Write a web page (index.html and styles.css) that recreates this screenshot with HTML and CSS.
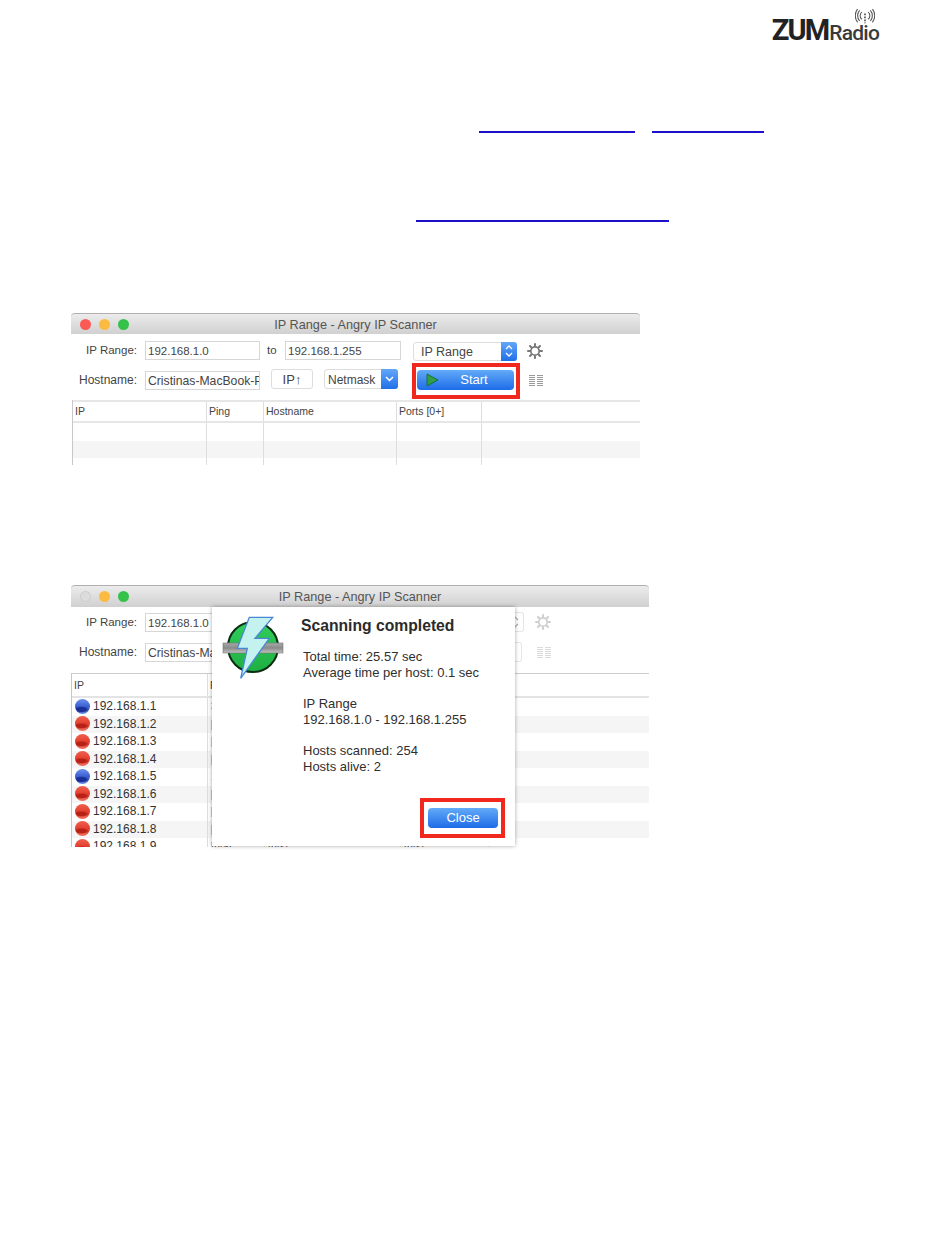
FILE: index.html
```html
<!DOCTYPE html>
<html lang="en">
<head>
<meta charset="utf-8">
<title>ZUM Radio - Angry IP Scanner</title>
<link rel="stylesheet" href="styles.css">
</head>
<body>
<div class="page">
  <header class="brand">
    <div class="logo">
      <span class="logo-zum">ZUM</span><span class="logo-radio">Radio</span>
      <svg class="logo-signal" width="20" height="16" viewBox="0 0 22 18" fill="none" stroke="#555" stroke-width="1.2">
        <path d="M7.5 3.5a5 5 0 0 0 0 8"/>
        <path d="M5 1.5a9 9 0 0 0 0 12"/>
        <path d="M2.7 0a12 12 0 0 0 0 15"/>
        <path d="M14.5 3.5a5 5 0 0 1 0 8"/>
        <path d="M17 1.5a9 9 0 0 1 0 12"/>
        <path d="M19.3 0a12 12 0 0 1 0 15"/>
        <path d="M11 5v11" stroke-width="1.6" stroke-dasharray="2 1.4" stroke="#333"/>
      </svg>
    </div>
  </header>

  <div class="links links-one">
    <span class="link link-a"></span>
    <span class="link link-b"></span>
  </div>
  <div class="links links-two">
    <span class="link link-c"></span>
  </div>

  <section class="window window-start">
    <div class="titlebar">
      <span class="light light-red"></span><span class="light light-yellow"></span><span class="light light-green"></span>
      <span class="title">IP Range - Angry IP Scanner</span>
    </div>
    <div class="toolbar">
      <div class="row row-first">
        <label class="label label-range">IP Range:</label>
        <span class="input input-ip">192.168.1.0</span>
        <span class="to">to</span>
        <span class="input input-ip2">192.168.1.255</span>
        <span class="select select-range">IP Range<span class="select-cap">
          <svg width="8" height="14" viewBox="0 0 8 14" fill="none" stroke="#fff" stroke-width="1.3"><path d="M1 5l3-3 3 3M1 9l3 3 3-3"/></svg>
        </span></span>
        <svg class="gear" width="16" height="16" viewBox="0 0 16 16"><use href="#gear-shape"/></svg>
      </div>
      <div class="row row-second">
        <label class="label">Hostname:</label>
        <span class="input input-ip host">Cristinas-MacBook-Pro</span>
        <span class="button button-ip">IP↑</span>
        <span class="select select-mask">Netmask<span class="select-cap cap-mask">
          <svg width="9" height="6" viewBox="0 0 9 6" fill="none" stroke="#fff" stroke-width="1.5"><path d="M1 1l3.5 3.5L8 1"/></svg>
        </span></span>
        <span class="start">
          <svg class="play" width="13" height="14" viewBox="0 0 13 14"><path d="M1 1l11 6-11 6z" fill="#2f9e45" stroke="#14662a" stroke-width=".8"/></svg>
          Start
        </span>
        <svg class="columns" width="14" height="12" viewBox="0 0 14 12" stroke="#999" stroke-width="1"><path d="M0 .5h6M8 .5h6M0 2.5h6M8 2.5h6M0 4.5h6M8 4.5h6M0 6.5h6M8 6.5h6M0 8.5h6M8 8.5h6M0 10.5h6M8 10.5h6"/></svg>
      </div>
    </div>
    <div class="table">
      <div class="thead">
        <span class="cell">IP</span><span class="cell">Ping</span><span class="cell">Hostname</span><span class="cell">Ports [0+]</span><span class="cell"></span>
      </div>
      <div class="trow blank"><span class="cell"></span><span class="cell"></span><span class="cell"></span><span class="cell"></span><span class="cell"></span></div>
      <div class="trow blank stripe"><span class="cell"></span><span class="cell"></span><span class="cell"></span><span class="cell"></span><span class="cell"></span></div>
      <div class="trow blank short"><span class="cell"></span><span class="cell"></span><span class="cell"></span><span class="cell"></span><span class="cell"></span></div>
    </div>
    <div class="redbox box-start"></div>
  </section>

  <section class="window window-done">
    <div class="titlebar">
      <span class="light light-off"></span><span class="light light-yellow"></span><span class="light light-green"></span>
      <span class="title">IP Range - Angry IP Scanner</span>
    </div>
    <div class="toolbar toolbar-done">
      <div class="row">
        <label class="label label-range">IP Range:</label>
        <span class="input input-wide">192.168.1.0</span>
        <span class="ghost ghost-select">
          <svg width="8" height="14" viewBox="0 0 8 14" fill="none" stroke="#aaa" stroke-width="1.2"><path d="M1 5l3-3 3 3M1 9l3 3 3-3"/></svg>
        </span>
        <svg class="gear gear-faded" width="16" height="16" viewBox="0 0 16 16"><use href="#gear-shape"/></svg>
      </div>
      <div class="row">
        <label class="label">Hostname:</label>
        <span class="input input-wide host">Cristinas-MacBook-Pro</span>
        <span class="ghost ghost-button"></span>
        <svg class="columns columns-faded" width="14" height="12" viewBox="0 0 14 12" stroke="#999" stroke-width="1"><path d="M0 .5h6M8 .5h6M0 2.5h6M8 2.5h6M0 4.5h6M8 4.5h6M0 6.5h6M8 6.5h6M0 8.5h6M8 8.5h6M0 10.5h6M8 10.5h6"/></svg>
      </div>
    </div>
    <div class="table table-done">
      <div class="thead"><span class="cell">IP</span><span class="cell">Ping</span><span class="cell">Hostname</span><span class="cell">Ports</span><span class="cell"></span></div>
      <div class="trow"><span class="cell ip"><i class="ball ball-blue"></i>192.168.1.1</span><span class="cell">3 ms</span><span class="cell">[n/s]</span><span class="cell">[n/s]</span><span class="cell"></span></div>
      <div class="trow stripe"><span class="cell ip"><i class="ball"></i>192.168.1.2</span><span class="cell">[n/a]</span><span class="cell">[n/s]</span><span class="cell">[n/s]</span><span class="cell"></span></div>
      <div class="trow"><span class="cell ip"><i class="ball"></i>192.168.1.3</span><span class="cell">[n/a]</span><span class="cell">[n/s]</span><span class="cell">[n/s]</span><span class="cell"></span></div>
      <div class="trow stripe"><span class="cell ip"><i class="ball"></i>192.168.1.4</span><span class="cell">[n/a]</span><span class="cell">[n/s]</span><span class="cell">[n/s]</span><span class="cell"></span></div>
      <div class="trow"><span class="cell ip"><i class="ball ball-blue"></i>192.168.1.5</span><span class="cell">1 ms</span><span class="cell">[n/s]</span><span class="cell">[n/s]</span><span class="cell"></span></div>
      <div class="trow stripe"><span class="cell ip"><i class="ball"></i>192.168.1.6</span><span class="cell">[n/a]</span><span class="cell">[n/s]</span><span class="cell">[n/s]</span><span class="cell"></span></div>
      <div class="trow"><span class="cell ip"><i class="ball"></i>192.168.1.7</span><span class="cell">[n/a]</span><span class="cell">[n/s]</span><span class="cell">[n/s]</span><span class="cell"></span></div>
      <div class="trow stripe"><span class="cell ip"><i class="ball"></i>192.168.1.8</span><span class="cell">[n/a]</span><span class="cell">[n/s]</span><span class="cell">[n/s]</span><span class="cell"></span></div>
      <div class="trow"><span class="cell ip"><i class="ball"></i>192.168.1.9</span><span class="cell">[n/a]</span><span class="cell">[n/s]</span><span class="cell">[n/s]</span><span class="cell"></span></div>
    </div>
    <div class="dialog">
      <svg class="bolt" width="62" height="64" viewBox="0 0 62 64">
        <defs>
          <linearGradient id="orb" x1="0" y1="0" x2="0" y2="1"><stop offset="0" stop-color="#2fcf5a"/><stop offset="1" stop-color="#1fae42"/></linearGradient>
          <linearGradient id="pipe" x1="0" y1="0" x2="0" y2="1"><stop offset="0" stop-color="#a8a8a8"/><stop offset=".5" stop-color="#8a8a8a"/><stop offset="1" stop-color="#c2c2c2"/></linearGradient>
        </defs>
        <circle cx="31" cy="31" r="25" fill="url(#orb)" stroke="#0c2c14" stroke-width="2"/>
        <rect x="1" y="27" width="60" height="10" fill="url(#pipe)" stroke="#777" stroke-width=".6"/>
        <path d="M27.3 1.3H50.7L33 22.3h14.3L18.7 62.3l6.6-30H15.3z" fill="#c4f2ee" stroke="#4a86d8" stroke-width="1.3"/>
      </svg>
      <div class="dialog-body">
        <h2 class="dialog-title">Scanning completed</h2>
        <p class="dialog-text">Total time: 25.57 sec<br>Average time per host: 0.1 sec</p>
        <p class="dialog-text">IP Range<br>192.168.1.0 - 192.168.1.255</p>
        <p class="dialog-text">Hosts scanned: 254<br>Hosts alive: 2</p>
      </div>
      <span class="close">Close</span>
      <div class="redbox box-close"></div>
    </div>
  </section>
</div>
<svg class="defs" width="0" height="0" aria-hidden="true">
  <symbol id="gear-shape" viewBox="0 0 16 16">
    <g fill="none" stroke="#777" stroke-linecap="round">
      <circle cx="8" cy="8" r="4.2" stroke-width="1.7"/>
      <path stroke-width="2" d="M8 1v1.6M8 13.4V15M1 8h1.6M13.4 8H15M3 3l1.2 1.2M11.8 11.8L13 13M13 3l-1.2 1.2M4.2 11.8L3 13"/>
    </g>
  </symbol>
</svg>
</body>
</html>
```
FILE: styles.css
```css
* { box-sizing: border-box; }
html, body { margin: 0; padding: 0; background: #fff; }
body { width: 950px; height: 1260px; overflow: hidden; font-family: "Liberation Sans", Arial, sans-serif; color: #333; }
.page { width: 950px; height: 1260px; overflow: hidden; }
.defs { position: absolute; }

.brand { display: flex; justify-content: flex-end; padding: 15px 71px 0 0; height: 131px; }
.logo { position: relative; display: flex; align-items: baseline; height: 30px; }
.logo-zum { font-family: Roboto, sans-serif; font-weight: 700; font-size: 29px; letter-spacing: -1.8px; line-height: 30px; color: #222; }
.logo-radio { font-family: Roboto, sans-serif; font-weight: 500; font-size: 21px; letter-spacing: -.8px; line-height: 30px; color: #3a3a3a; margin-left: 1px; }
.logo-signal { position: absolute; right: 4px; top: -6px; }

.links { display: flex; height: 2px; }
.link { display: block; height: 2px; background: #1c10c8; }
.links-one { padding-left: 479px; gap: 17px; }
.links-two { padding-left: 416px; margin-top: 87px; }
.link-a { width: 156px; }
.link-b { width: 112px; }
.link-c { width: 253px; }

.window { position: relative; margin-left: 71px; overflow: hidden; }
.window-start { width: 569px; height: 152px; margin-top: 91px; }
.window-done { width: 578px; height: 262px; margin-top: 120px; overflow: visible; }
.window-done .table { height: 174px; overflow: hidden; }

.titlebar { position: relative; display: flex; align-items: center; gap: 8px; height: 21px; padding-left: 9px; background: linear-gradient(#ececec, #d0d0d0); border-top: 1px solid #b0b0b0; border-radius: 4px 4px 0 0; }
.window-done .titlebar { height: 22px; }
.light { width: 11px; height: 11px; border-radius: 50%; }
.light-red { background: #fb5a55; }
.light-yellow { background: #fcbb40; }
.light-green { background: #34c24a; }
.light-off { background: #dcdcdc; border: 1px solid #ccc; }
.title { position: absolute; left: 0; right: 0; top: 3px; text-align: center; font-size: 12.7px; line-height: 16px; color: #555; }

.toolbar { display: flex; flex-direction: column; gap: 10px; height: 66px; padding-top: 6px; font-size: 11.5px; }
.toolbar-done { padding-top: 5px; }
.row { display: flex; align-items: center; height: 20px; }
.label { width: 66px; text-align: right; margin-right: 8px; color: #444; white-space: nowrap; font-size: 12px; }
.label-range { font-size: 11.5px; }
.input { display: block; height: 19px; line-height: 19px; padding-left: 2px; background: #fff; border: 1px solid #d6d6d6; overflow: hidden; white-space: nowrap; color: #444; }
.input.host { font-size: 12.2px; }
.input-ip { width: 115px; }
.input-ip2 { width: 116px; }
.input-wide { width: 160px; }
.to { width: 25px; padding-left: 7px; color: #444; }
.select { position: relative; display: block; height: 19px; line-height: 19px; background: #fff; border: 1px solid #ddd; border-radius: 3px; color: #444; }
.select-range { width: 104px; margin: 2px 0 0 12px; padding-left: 7px; font-size: 12.5px; }
.select-mask { width: 74px; margin: -3px 0 0 11px; padding: 1px 0 0 3px; height: 20px; font-size: 12px; }
.select-cap { position: absolute; right: -1px; top: -1px; bottom: -1px; width: 16px; display: flex; align-items: center; justify-content: center; background: linear-gradient(#63a7f8, #1f6fe8); border-radius: 0 3px 3px 0; }
.cap-mask { width: 17px; }
.gear { margin: 1px 0 0 10px; }
.gear-faded { opacity: .35; margin: 0 0 0 11px; }
.button { display: block; width: 42px; height: 20px; margin: -3px 0 0 11px; text-align: center; line-height: 19px; background: #fff; border: 1px solid #ddd; border-radius: 3px; color: #444; font-size: 13px; }
.start { position: relative; display: flex; justify-content: center; width: 97px; height: 20px; margin-left: 19px; padding-left: 17px; line-height: 20px; font-size: 13px; color: #fff; background: linear-gradient(#63aaf8, #1d6ce8); border-radius: 4px; }
.play { position: absolute; left: 9px; top: 3px; }
.columns { margin: 1px 0 0 15px; }
.columns-faded { opacity: .35; margin: 1px 0 0 15px; }
.ghost { display: flex; flex: 1; align-items: center; justify-content: flex-end; padding-right: 4px; border: 1px solid #e6e6e6; border-left: 0; border-radius: 0 3px 3px 0; height: 20px; }
.toolbar-done .row { width: 480px; }

.table { font-size: 10.5px; color: #444; border-left: 1px solid #c8c8c8; margin-left: 1px; }
.thead, .trow { display: grid; grid-template-columns: 134px 57px 133px 85px 1fr; }
.thead { height: 23px; line-height: 18px; border-top: 2px solid #e6e6e6; border-bottom: 2px solid #e6e6e6; }
.trow { height: 17.5px; line-height: 16px; }
.stripe { background: #f5f5f5; }
.blank.short { height: 7px; }
.cell { display: block; padding-left: 2px; border-right: 1px solid #ddd; white-space: nowrap; overflow: hidden; }
.cell:last-child { border-right: 0; }

.table-done { border-top: 1px solid #ccc; margin-left: 0; }
.table-done .thead { height: 24px; line-height: 22px; border-top: 0; border-bottom: 2px solid #e4e4e4; }
.table-done .thead, .table-done .trow { grid-template-columns: 136px 57px 136px 89px 1fr; }
.table-done .trow .cell { padding-left: 3px; }
.table-done .ip { display: flex; align-items: center; gap: 3px; padding-bottom: 1px; font-size: 12px; color: #333; }
.ball { display: block; flex: none; width: 15px; height: 15px; border-radius: 50%; background: radial-gradient(ellipse 55% 20% at 42% 66%, #b82216 0 60%, transparent 100%), linear-gradient(#f0604f, #e4402f 50%, #f07060); }
.ball-blue { background: radial-gradient(ellipse 55% 22% at 42% 70%, #1a2f96 0 60%, transparent 100%), linear-gradient(#6c90ee, #3c60d0 50%, #6a8ce8); }

.dialog { position: absolute; left: 141px; top: 22px; width: 303px; height: 239px; background: #fff; box-shadow: 0 0 4px rgba(0, 0, 0, .35); }
.bolt { position: absolute; left: 10px; top: 9px; }
.dialog-body { padding: 10px 0 0 89px; }
.dialog-title { margin: 0 0 14px; font-size: 15.7px; line-height: 18px; font-weight: 700; color: #2b2b2b; }
.dialog-text { margin: 0 0 15px 2px; font-size: 13px; line-height: 16px; color: #2f2f2f; }
.close { position: absolute; left: 216px; top: 201px; width: 70px; height: 20px; line-height: 20px; text-align: center; font-size: 13px; color: #fff; background: linear-gradient(#63aaf8, #1d6ce8); border-radius: 4px; }

.redbox { position: absolute; border: 4px solid #f0281e; }
.box-start { left: 341px; top: 50px; width: 108px; height: 36px; }
.box-close { left: 208px; top: 191px; width: 85px; height: 40px; }
```
